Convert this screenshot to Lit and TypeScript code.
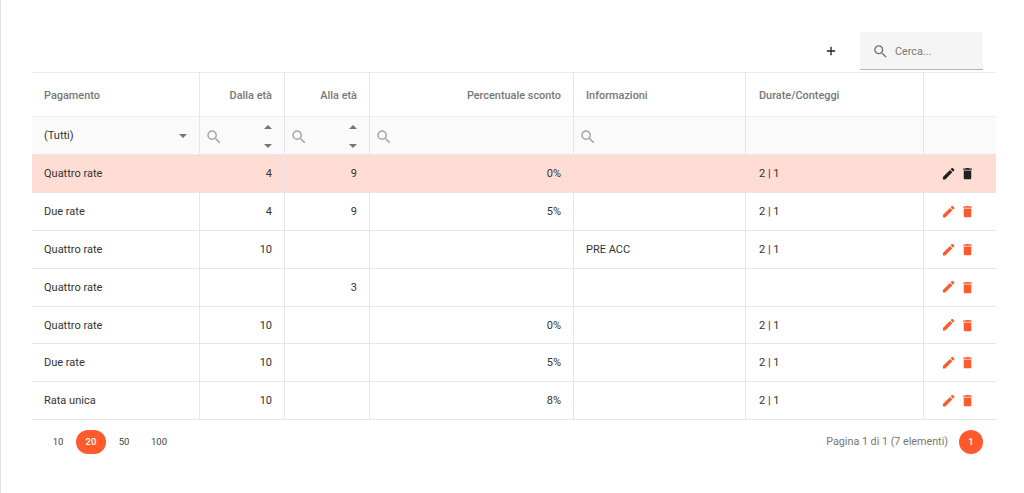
import { LitElement, html, css, svg } from "lit";
import { customElement } from "lit/decorators.js";

const searchPath = "M15.5 14h-.79l-.28-.27A6.47 6.47 0 0 0 16 9.5 6.5 6.5 0 1 0 9.5 16c1.61 0 3.09-.59 4.23-1.57l.27.28v.79l5 4.99L20.49 19l-4.99-5zm-6 0C7.01 14 5 11.99 5 9.5S7.01 5 9.5 5 14 7.01 14 9.5 11.99 14 9.5 14z";
const pencilPath = "M3 17.25V21h3.75L17.81 9.94l-3.75-3.75L3 17.25zM20.71 7.04a1 1 0 0 0 0-1.41l-2.34-2.34a1 1 0 0 0-1.41 0l-1.83 1.83 3.75 3.75 1.83-1.83z";
const trashPath = "M6 19c0 1.1.9 2 2 2h8c1.1 0 2-.9 2-2V7H6v12zM19 4h-3.5l-1-1h-5l-1 1H5v2h14V4z";

const icon = (d: string, cls: string) => html`<svg class=${cls} viewBox="0 0 24 24">${svg`<path d=${d}></path>`}</svg>`;

interface Row { pay: string; from: string; to: string; pct: string; info: string; dur: string; }
const rows: Row[] = [
  { pay: "Quattro rate", from: "4", to: "9", pct: "0%", info: "", dur: "2 | 1" },
  { pay: "Due rate", from: "4", to: "9", pct: "5%", info: "", dur: "2 | 1" },
  { pay: "Quattro rate", from: "10", to: "", pct: "", info: "PRE ACC", dur: "2 | 1" },
  { pay: "Quattro rate", from: "", to: "3", pct: "", info: "", dur: "" },
  { pay: "Quattro rate", from: "10", to: "", pct: "0%", info: "", dur: "2 | 1" },
  { pay: "Due rate", from: "10", to: "", pct: "5%", info: "", dur: "2 | 1" },
  { pay: "Rata unica", from: "10", to: "", pct: "8%", info: "", dur: "2 | 1" },
];

@customElement("app-root")
export class AppRoot extends LitElement {
  static styles = css`
    :host { display: block; height: 493px; box-sizing: border-box; background: #fff; border-left: 1px solid #e2e2e2; font-family: Roboto, sans-serif; font-size: 11px; color: #333; overflow: hidden; padding: 32px 28px 0 31px; }
    .toolbar { display: flex; justify-content: flex-end; align-items: center; height: 38px; padding-right: 13px; margin-bottom: 2px; }
    .plus { width: 10px; height: 10px; margin-right: 24.5px; fill: #222; }
    .search { width: 123px; height: 38px; box-sizing: border-box; background: #f5f5f5; border-bottom: 1px solid #b5b5b5; display: flex; align-items: center; padding: 1px 0 0 12px; gap: 6px; color: #777; font-size: 10.8px; }
    .search svg { width: 17px; height: 17px; fill: #757575; }
    .table { display: grid; grid-template-columns: 168px 85px 85px 204px 172px 178px 72px; grid-template-rows: 44px 38px repeat(7, 37.9px); border-top: 1px solid #ececec; }
    .cell { display: flex; align-items: center; padding: 0 12px; box-sizing: border-box; border-bottom: 1px solid #e6e6e6; border-right: 1px solid #e6e6e6; min-width: 0; }
    .cell.last { border-right: none; }
    .right { justify-content: flex-end; }
    .dur { padding-left: 13px; }
    .head { color: #777; font-weight: 500; font-size: 10.9px; border-bottom-color: #eeeeee; padding-top: 1px; }
    .filter { background: #fafafa; padding: 0 5px; justify-content: space-between; border-bottom-color: #e8e8e8; }
    .filter.first { padding: 0 12px; }
    .caret { width: 0; height: 0; border-left: 4px solid transparent; border-right: 4px solid transparent; border-top: 4.5px solid #757575; }
    .mag { width: 18px; height: 18px; fill: #a6a6a6; margin-top: 2px; }
    .spin { display: flex; flex-direction: column; align-items: center; gap: 15px; margin-right: 7px; margin-top: 1px; }
    .up { width: 0; height: 0; border-left: 4px solid transparent; border-right: 4px solid transparent; border-bottom: 4.5px solid #757575; }
    .selected { background: #ffddd4; }
    .actions { justify-content: center; gap: 4.5px; padding: 0 4px 0 0; }
    .act { width: 15px; height: 15px; fill: #ff5a2c; }
    .selected .act { fill: #212121; }
    .act.pen { width: 15.3px; height: 15.3px; }
    .pager { display: flex; justify-content: space-between; align-items: center; height: 43px; padding: 0 13px 0 0; }
    .sizes { display: flex; align-items: center; padding-left: 8px; }
    .size { width: 36px; height: 24px; display: flex; align-items: center; justify-content: center; border-radius: 12px; font-size: 9.5px; color: #444; }
    .size.wide { width: 34px; }
    .size.on { width: 30px; background: #ff5a2c; color: #fff; font-weight: 500; }
    .info { display: flex; align-items: center; gap: 11px; color: #777; font-size: 10.75px; }
    .page { width: 24px; height: 24px; border-radius: 50%; background: #ff5a2c; color: #fff; display: flex; align-items: center; justify-content: center; font-weight: 500; font-size: 9.5px; }
  `;

  render() {
    return html`
      <div class="toolbar">
        <svg class="plus" viewBox="0 0 12 12"><path d="M5.2 1h1.6v4.2H11v1.6H6.8V11H5.2V6.8H1V5.2h4.2z"></path></svg>
        <div class="search">${icon(searchPath, "")}<span>Cerca...</span></div>
      </div>
      <div class="table">
        <div class="cell head">Pagamento</div>
        <div class="cell head right">Dalla età</div>
        <div class="cell head right">Alla età</div>
        <div class="cell head right">Percentuale sconto</div>
        <div class="cell head">Informazioni</div>
        <div class="cell head dur">Durate/Conteggi</div>
        <div class="cell head last"></div>

        <div class="cell filter first"><span>(Tutti)</span><span class="caret"></span></div>
        <div class="cell filter">${icon(searchPath, "mag")}<span class="spin"><span class="up"></span><span class="caret"></span></span></div>
        <div class="cell filter">${icon(searchPath, "mag")}<span class="spin"><span class="up"></span><span class="caret"></span></span></div>
        <div class="cell filter">${icon(searchPath, "mag")}</div>
        <div class="cell filter">${icon(searchPath, "mag")}</div>
        <div class="cell filter"></div>
        <div class="cell filter last"></div>

        ${rows.map((r, i) => {
          const s = i === 0 ? "selected" : "";
          return html`
            <div class="cell ${s}">${r.pay}</div>
            <div class="cell right ${s}">${r.from}</div>
            <div class="cell right ${s}">${r.to}</div>
            <div class="cell right ${s}">${r.pct}</div>
            <div class="cell ${s}">${r.info}</div>
            <div class="cell dur ${s}">${r.dur}</div>
            <div class="cell last actions ${s}">${icon(pencilPath, "act pen")}${icon(trashPath, "act")}</div>
          `;
        })}
      </div>
      <div class="pager">
        <div class="sizes">
          <span class="size">10</span><span class="size on">20</span><span class="size">50</span><span class="size wide">100</span>
        </div>
        <div class="info"><span>Pagina 1 di 1 (7 elementi)</span><span class="page">1</span></div>
      </div>
    `;
  }
}
